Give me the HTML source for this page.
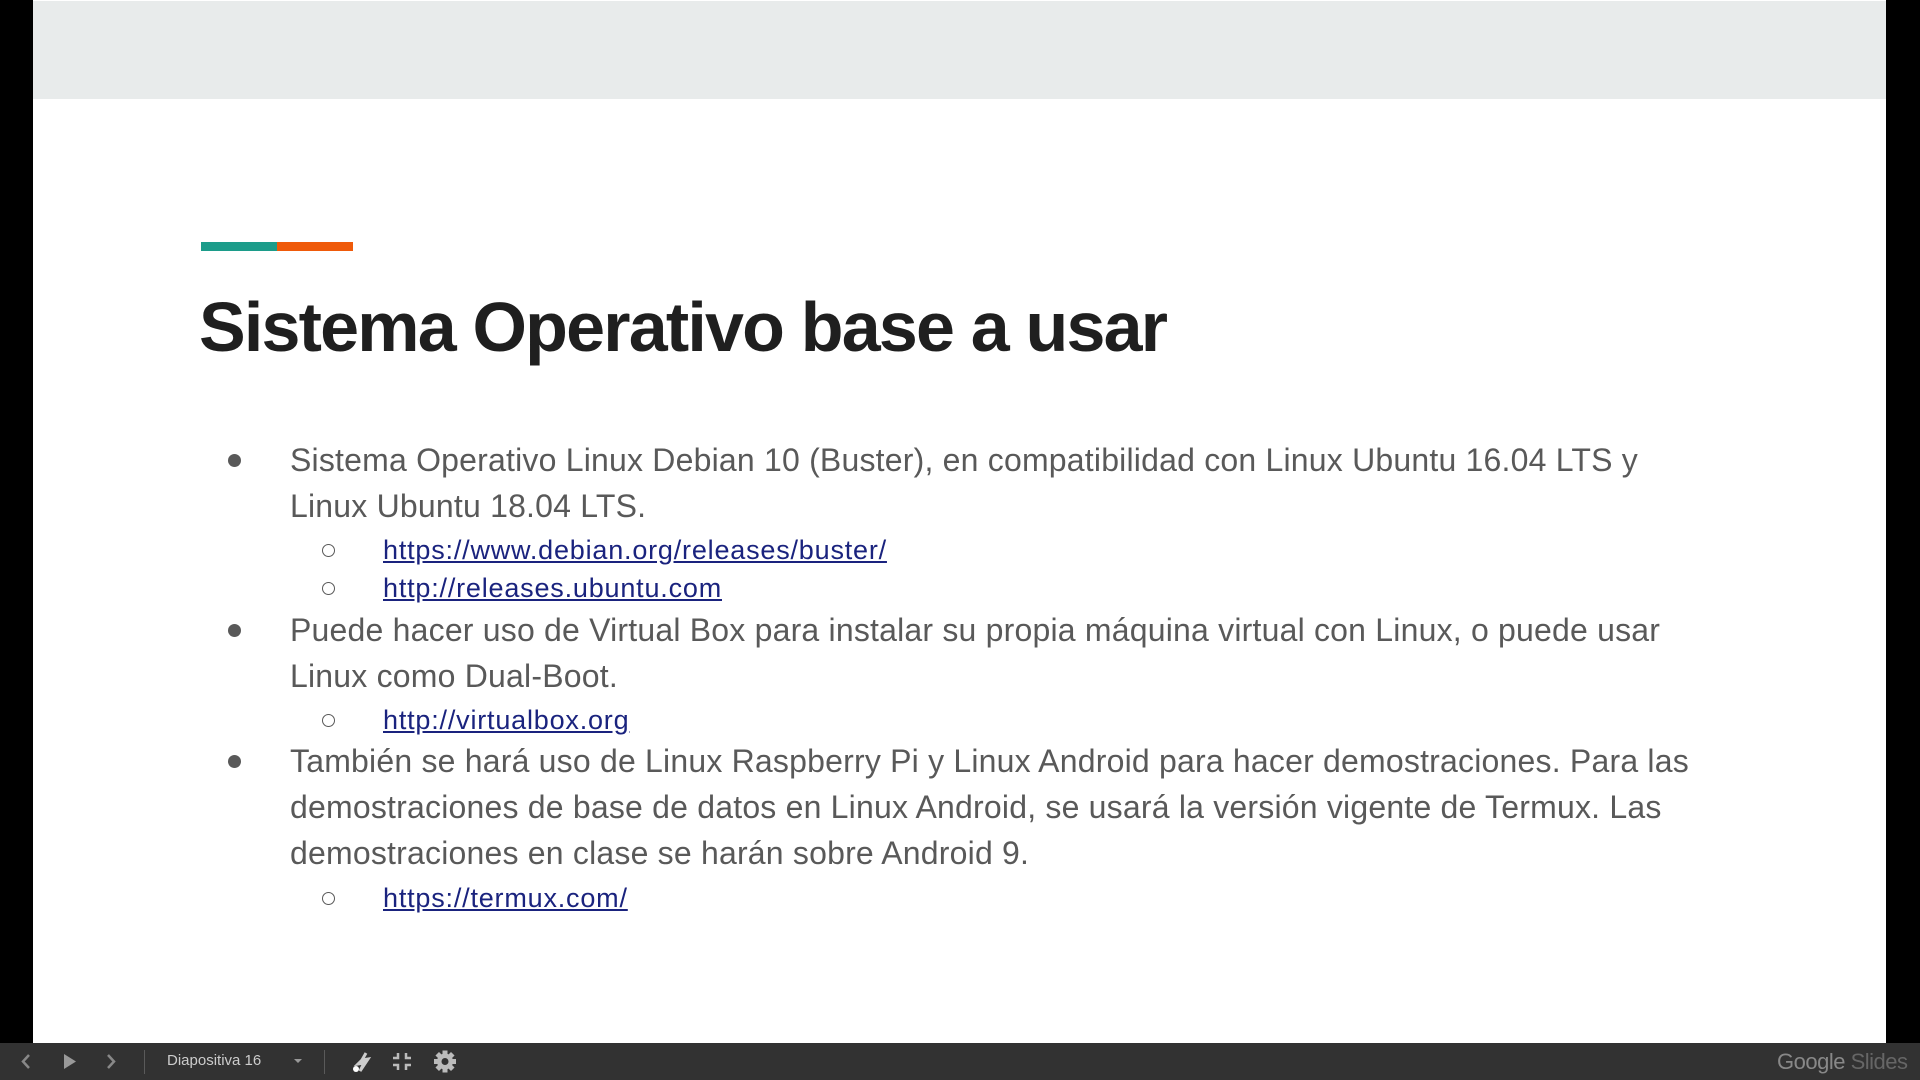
<!DOCTYPE html>
<html><head><meta charset="utf-8"><style>
*{margin:0;padding:0;box-sizing:border-box}
body{width:1920px;height:1080px;background:#000;position:relative;overflow:hidden;font-family:"Liberation Sans",sans-serif}
.slide{position:absolute;left:33px;top:0;width:1853px;height:1043px;background:#fff}
.band{position:absolute;left:33px;top:1px;width:1853px;height:98px;background:#e8ebeb}
.t{position:absolute;white-space:nowrap}
.title{left:199px;top:287px;font-size:70px;font-weight:bold;color:#1f1f1f;letter-spacing:-1.8px;line-height:80px}
.b{font-size:32px;color:#595959;left:290px;line-height:40px;letter-spacing:0.2px}
.dot{position:absolute;width:13px;height:13px;border-radius:50%;background:#595959;left:228px}
.sub{position:absolute;left:322px;width:13px;height:13px;border:1.5px solid #595959;border-radius:50%}
.l{font-size:27px;color:#1a237e;text-decoration:underline;left:383px;line-height:34px;letter-spacing:0.8px}
.bar{position:absolute;left:0;top:1043px;width:1920px;height:37px;background:#323232}
.sep{position:absolute;top:1050px;width:1px;height:24px;background:#5a5a5a}
</style></head><body>
<div class="slide"></div>
<div class="band"></div>
<div style="position:absolute;left:201px;top:242px;width:76px;height:9px;background:#1c9c8a"></div>
<div style="position:absolute;left:277px;top:242px;width:76px;height:9px;background:#ef5a0a"></div>
<div class="t title">Sistema Operativo base a usar</div>

<div class="dot" style="top:454px"></div>
<div class="t b" style="top:440px">Sistema Operativo Linux Debian 10 (Buster), en compatibilidad con Linux Ubuntu 16.04 LTS y</div>
<div class="t b" style="top:486px">Linux Ubuntu 18.04 LTS.</div>
<div class="sub" style="top:544px"></div>
<div class="t l" style="top:533px">https://www.debian.org/releases/buster/</div>
<div class="sub" style="top:582px"></div>
<div class="t l" style="top:571px">http://releases.ubuntu.com</div>

<div class="dot" style="top:624px"></div>
<div class="t b" style="top:610px">Puede hacer uso de Virtual Box para instalar su propia máquina virtual con Linux, o puede usar</div>
<div class="t b" style="top:656px">Linux como Dual-Boot.</div>
<div class="sub" style="top:714px"></div>
<div class="t l" style="top:703px">http://virtualbox.org</div>

<div class="dot" style="top:755px"></div>
<div class="t b" style="top:741px">También se hará uso de Linux Raspberry Pi y Linux Android para hacer demostraciones. Para las</div>
<div class="t b" style="top:787px">demostraciones de base de datos en Linux Android, se usará la versión vigente de Termux. Las</div>
<div class="t b" style="top:833px">demostraciones en clase se harán sobre Android 9.</div>
<div class="sub" style="top:892px"></div>
<div class="t l" style="top:881px">https://termux.com/</div>

<div class="bar"></div>
<svg style="position:absolute;left:0;top:1043px" width="480" height="37">
<path d="M29 12 L23 18.5 L29 25" stroke="#888" stroke-width="2.5" fill="none"/>
<path d="M64 11 L76 18.5 L64 26 Z" fill="#999"/>
<path d="M108 12 L114 18.5 L108 25" stroke="#888" stroke-width="2.5" fill="none"/>
<path d="M294 16 L302 16 L298 20 Z" fill="#999"/>
<path d="M362 17 L366 10 L362 17 L368 16 L360 28 L364 20 L358 21 L362 17" stroke="#ccc" stroke-width="3" fill="#ccc"/>
<circle cx="356" cy="26" r="3" fill="#fff"/>
<path d="M398 10 V15 H393 M406 10 V15 H411 M398 27 V22 H393 M406 27 V22 H411" stroke="#bbb" stroke-width="2.5" fill="none"/>
<g transform="translate(445 18.5)" fill="#bbb"><rect x="-2.5" y="-11" width="5" height="22"/><rect x="-2.5" y="-11" width="5" height="22" transform="rotate(45)"/><rect x="-2.5" y="-11" width="5" height="22" transform="rotate(90)"/><rect x="-2.5" y="-11" width="5" height="22" transform="rotate(135)"/><circle r="8"/><circle r="3.5" fill="#323232"/></g>
</svg>
<div class="sep" style="left:144px"></div>
<div class="sep" style="left:324px"></div>
<div class="t" style="left:167px;top:1052px;font-size:15px;color:#ccc">Diapositiva 16</div>
<div class="t" style="left:1777px;top:1049px;font-size:22px;color:#888;letter-spacing:-0.5px">Google <span style="color:#666">Slides</span></div>
</body></html>
